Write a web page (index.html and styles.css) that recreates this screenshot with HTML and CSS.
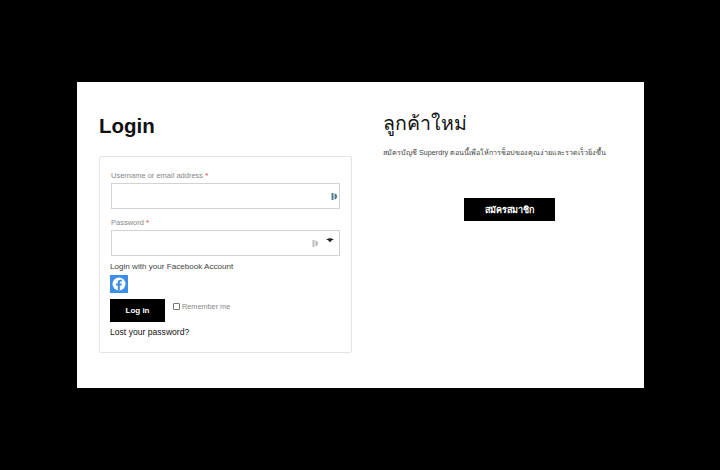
FILE: index.html
```html
<!DOCTYPE html>
<html lang="en">
<head>
    <meta charset="UTF-8">
    <meta name="viewport" content="width=device-width, initial-scale=1.0">
    <title>Login</title>
    <link rel="stylesheet" href="styles.css">
</head>
<body>
    <div class="panel">
        <div class="login-col">
            <h2 class="login-title">Login</h2>
            <form class="login-box">
                <label class="field-label">Username or email address <span class="req">*</span></label>
                <div class="input-box">
                    <svg class="key-icon" viewBox="0 0 7 9"><path d="M0.500 1h2v7h-2zM3.500 1.500C7 1.500 7 7.500 3.500 7.500z" fill="#4f7f8c"/></svg>
                </div>
                <label class="field-label second">Password <span class="req">*</span></label>
                <div class="input-box">
                    <svg class="key-icon" viewBox="0 0 7 9"><path d="M0.500 1h2v7h-2zM3.500 1.500C7 1.500 7 7.500 3.500 7.500z" fill="#bdbdbd"/></svg>
                    <svg class="eye-icon" viewBox="0 0 10 6"><path d="M0 2.200C3 -0.400 7 -0.400 10 2.200L7 2.700C6.500 5.500 3.500 5.500 3 2.700z" fill="#222"/></svg>
                </div>
                <div class="fb-text">Login with your Facebook Account</div>
                <div class="fb-btn">
                    <svg viewBox="0 0 18 18" width="18" height="18">
                        <rect width="18" height="18" fill="#3b8fe8"/>
                        <circle cx="9" cy="9" r="6.500" fill="#fff"/>
                        <path d="M9.800 15.600V10.600H11.500L11.800 8.600H9.800V7.500C9.800 6.900 10.100 6.500 10.900 6.500H11.900V4.800C11.400 4.700 10.900 4.700 10.400 4.700C8.800 4.700 7.800 5.600 7.800 7.200V8.600H6V10.600H7.800V15.600z" fill="#3b8fe8"/>
                    </svg>
                </div>
                <div class="login-row">
                    <button type="button" class="login-btn">Log in</button>
                    <label class="remember"><span class="check"></span>Remember me</label>
                </div>
                <a class="lost-link">Lost your password?</a>
            </form>
        </div>
        <div class="register-col">
            <h2 class="register-title">ลูกค้าใหม่</h2>
            <p class="register-text">สมัครบัญชี Superdry ตอนนี้เพื่อให้การช็อปของคุณง่ายและรวดเร็วยิ่งขึ้น</p>
            <button type="button" class="register-btn">สมัครสมาชิก</button>
        </div>
    </div>
</body>
</html>
```

FILE: styles.css
```css
*{
    margin: 0;
    padding: 0;
    box-sizing: border-box;
}

body{
    background-color: #000;
    font-family: "Liberation Sans", "Noto Sans", sans-serif;
}

.panel{
    width: 567px;
    height: 306px;
    margin: 82px 0 0 77px;
    background-color: #fff;
    display: flex;
}

.login-col{
    width: 275px;
    margin-left: 22px;
    padding-top: 31px;
}

.login-title{
    font-size: 20.500px;
    line-height: 25px;
    font-weight: bold;
    color: #111;
}

.login-box{
    width: 253px;
    height: 197px;
    margin-top: 18px;
    padding: 14px 11px 0 11px;
    border: 1px solid #e3e3e3;
    border-radius: 2px;
}

.field-label{
    display: block;
    font-size: 7.500px;
    line-height: 10px;
    color: #888;
    margin-bottom: 2px;
}

.field-label.second{
    margin-top: 9px;
}

.req{
    color: #d33;
}

.input-box{
    height: 26px;
    border: 1px solid #d2d2d2;
    display: flex;
    align-items: center;
    justify-content: flex-end;
}

.key-icon{
    width: 7px;
    height: 9px;
    margin-right: 1px;
    margin-top: 1px;
}

.input-box .key-icon + .eye-icon{
    margin-left: 6px;
    margin-right: 5px;
    margin-top: -6px;
}

.eye-icon{
    width: 8px;
    height: 5px;
}

.fb-text{
    margin: 5px 0 0 -1px;
    font-size: 8.100px;
    line-height: 11px;
    color: #444;
}

.fb-btn{
    height: 18px;
    margin: 3px 0 0 -1px;
}

.fb-btn svg{
    display: block;
}

.login-row{
    display: flex;
    margin: 6px 0 0 -1px;
}

.login-btn{
    width: 55px;
    height: 23px;
    background-color: #000;
    color: #fff;
    border: none;
    font-family: inherit;
    font-size: 8px;
    font-weight: bold;
}

.remember{
    display: flex;
    align-items: center;
    height: 10px;
    margin: 2px 0 0 8px;
    font-size: 7.300px;
    color: #888;
}

.check{
    width: 7px;
    height: 7px;
    margin-right: 2px;
    border: 1px solid #777;
    border-radius: 1px;
}

.lost-link{
    display: block;
    margin: 5px 0 0 -1px;
    font-size: 8.600px;
    line-height: 11px;
    color: #111;
}

.register-col{
    margin-left: 9px;
    padding-top: 26px;
    width: 240px;
}

.register-title{
    font-family: "Noto Sans", "Liberation Sans", sans-serif;
    font-size: 19.500px;
    line-height: 30px;
    font-weight: normal;
    color: #111;
}

.register-text{
    margin-top: 9px;
    font-size: 7.200px;
    line-height: 12px;
    color: #444;
    white-space: nowrap;
}

.register-btn{
    display: block;
    width: 91px;
    height: 23px;
    margin: 39px 0 0 81px;
    background-color: #000;
    color: #fff;
    border: none;
    font-family: inherit;
    font-size: 9px;
    font-weight: bold;
}
```
